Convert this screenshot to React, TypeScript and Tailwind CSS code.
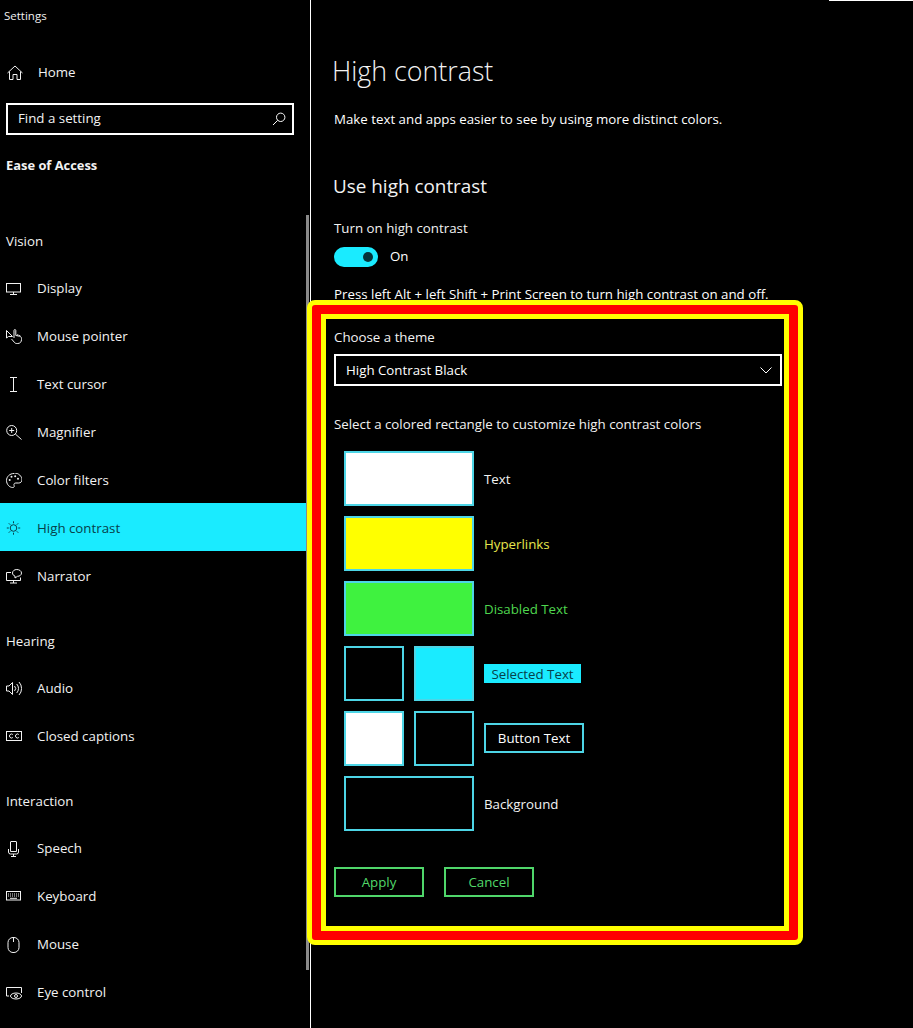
import React from "react";

const font = "font-['Open_Sans','Noto_Sans',sans-serif]";

function Ico({ children, w = 16, h = 16, vb = "0 0 16 16", className = "" }: { children: React.ReactNode; w?: number; h?: number; vb?: string; className?: string }) {
  return (
    <svg width={w} height={h} viewBox={vb} fill="none" stroke="currentColor" strokeWidth={1} className={`block shrink-0 ${className}`}>
      {children}
    </svg>
  );
}

const icons = {
  home: (
    <Ico>
      <path d="M.5 8 8 1l7.5 7" />
      <path d="M2.5 6.5v8H6v-5h4v5h3.5v-8" />
    </Ico>
  ),
  search: (
    <Ico w={14} h={14} vb="0 0 14 14">
      <circle cx="8.7" cy="5.3" r="4.2" />
      <path d="M5.7 8.3 1 13" />
    </Ico>
  ),
  display: (
    <Ico>
      <rect x=".5" y="2.5" width="14" height="8.5" />
      <path d="M7.5 11v2.5M4 13.5h7" />
    </Ico>
  ),
  pointer: (
    <Ico>
      <path d="M.5 1.500V9l2-1.500H6.500z" />
      <path d="M8 9V1.500c0-1.300 1.800-1.300 1.800 0V6.500l3.700.7c1.300.3 2 1 2 2.300v1c0 2.500-1.500 4-3.700 4h-1c-1.300 0-2-.5-2.700-1.500L5.500 10" />
      <path d="M11.800 6.800V5.200M13.700 7.200V6" />
    </Ico>
  ),
  cursor: (
    <Ico>
      <path d="M7.500.5v14M4 .5h7M4 14.500h7" />
    </Ico>
  ),
  magnifier: (
    <Ico>
      <circle cx="5.700" cy="5.500" r="5" />
      <path d="M9.300 9 15.500 14.500M5.700 3v5M3.200 5.500h5" />
    </Ico>
  ),
  palette: (
    <Ico>
      <path d="M8 .5C3.800.5.5 3.600.5 7.500c0 3.600 2.800 7 6.200 7 1.500 0 1.800-1 1.400-2-.5-1.200 0-2.500 1.700-2.500h2.900c1.600 0 3.300-1.200 3.300-3 0-3.700-3.400-7-7.500-7z" />
      <circle cx="3.700" cy="7" r="1" fill="currentColor" stroke="none" />
      <circle cx="5.500" cy="3.800" r="1" fill="currentColor" stroke="none" />
      <circle cx="9.200" cy="3.200" r="1" fill="currentColor" stroke="none" />
      <circle cx="12" cy="5.700" r="1" fill="currentColor" stroke="none" />
    </Ico>
  ),
  sun: (
    <Ico>
      <circle cx="7.500" cy="7" r="3.300" />
      <path d="M7.500.3v2M7.500 11.700v2M.8 7h2M12.200 7h2M2.800 2.300l1.400 1.400M10.800 10.300l1.400 1.400M12.200 2.300l-1.400 1.400M4.200 10.300l-1.400 1.400" />
    </Ico>
  ),
  narrator: (
    <Ico>
      <path d="M5 3.500H.5v8h14V8.500" />
      <path d="M7.500 11.500v2.500M4 14h7" />
      <path d="M6.500 4c0-2 1.800-3.500 4.300-3.500S15.500 2 15.500 4s-1.800 3.300-4 3.300L9 9V7C7.500 6.700 6.500 5.500 6.500 4z" />
    </Ico>
  ),
  audio: (
    <Ico>
      <path d="M.5 5H3L6.500 1.500v12L3 10H.5z" />
      <path d="M8.500 5a3.500 3.500 0 0 1 0 5M10.700 3a6.500 6.500 0 0 1 0 9M13 1a9.500 9.500 0 0 1 0 13" />
    </Ico>
  ),
  cc: (
    <Ico>
      <rect x=".5" y="2.500" width="15" height="9" />
      <path d="M6.800 5.500A2 2 0 1 0 6.800 8.500M12.800 5.500A2 2 0 1 0 12.800 8.500" />
    </Ico>
  ),
  mic: (
    <Ico>
      <path d="M5 .5h5a.5.5 0 0 1 .5.5v9.500h-6V1a.5.5 0 0 1 .5-.5z" />
      <path d="M2.500 8v3a2 2 0 0 0 2 2h6a2 2 0 0 0 2-2V8M7.500 13v2M5 15.500h5" />
    </Ico>
  ),
  keyboard: (
    <Ico>
      <rect x=".5" y="2.500" width="14" height="8.500" />
      <path d="M2 5h11M2 7h11" strokeDasharray="1 1" />
      <path d="M4 9.300h7" />
    </Ico>
  ),
  mouse: (
    <Ico>
      <rect x="2" y=".5" width="11" height="15" rx="5" />
      <path d="M7.500.5V5" />
    </Ico>
  ),
  eye: (
    <Ico>
      <path d="M.5 11V2.500h15V8M.5 11H3" />
      <ellipse cx="10" cy="11" rx="5.500" ry="3" />
      <circle cx="10" cy="11" r="1.500" />
    </Ico>
  ),
};

type Item = { label: string; icon: React.ReactNode; active?: boolean };

function NavRow({ label, icon, active }: Item) {
  return (
    <div className={`h-[48px] pt-[4px] flex items-center ${active ? "bg-[#1aebff] text-[#07414a]" : "text-[#f2f2f2]"}`}>
      <div className="w-[37px] pl-[6px] shrink-0">{icon}</div>
      <span className="text-[13.3px]">{label}</span>
    </div>
  );
}

function Group({ title, items, className }: { title: string; items: Item[]; className?: string }) {
  return (
    <div className={className}>
      <div className="h-[24px] pt-[2px] pl-[6px] flex items-center text-[13.3px] text-[#f2f2f2]">{title}</div>
      <div className="mt-[10px] flex flex-col">
        {items.map((i) => (
          <NavRow key={i.label} {...i} />
        ))}
      </div>
    </div>
  );
}

function Swatch({ w, bg }: { w: string; bg?: string }) {
  return <div className={`${w} h-[55px] border-2 border-[#4dd5e6] ${bg ?? "bg-black"}`} />;
}

export default function App() {
  return (
    <div className={`relative w-[913px] h-[1028px] overflow-hidden bg-black text-white flex ${font}`}>
      <div className="absolute top-0 right-0 w-[84px] h-px bg-white" />
      <aside className="relative w-[310px] shrink-0">
        <div className="pl-[4px] pt-[8px] h-[16px] text-[11.5px] leading-[16px] text-[#f0f0f0]">Settings</div>
        <div className="mt-[36px] h-[40px] pt-[2px] flex items-center text-[#f2f2f2]">
          <div className="w-[38px] pl-[7px]">{icons.home}</div>
          <span className="text-[13.3px]">Home</span>
        </div>
        <div className="ml-[6px] mt-[11px] w-[288px] h-[32px] border-2 border-white flex items-center justify-between pl-[10px] pr-[6px]">
          <span className="text-[13.3px] text-[#f2f2f2]">Find a setting</span>
          {icons.search}
        </div>
        <div className="pl-[6px] mt-[21px] text-[12.9px] font-bold leading-[18px] text-[#f2f2f2]">Ease of Access</div>
        <Group
          className="mt-[55px]"
          title="Vision"
          items={[
            { label: "Display", icon: icons.display },
            { label: "Mouse pointer", icon: icons.pointer },
            { label: "Text cursor", icon: icons.cursor },
            { label: "Magnifier", icon: icons.magnifier },
            { label: "Color filters", icon: icons.palette },
            { label: "High contrast", icon: icons.sun, active: true },
            { label: "Narrator", icon: icons.narrator },
          ]}
        />
        <Group
          className="mt-[30px]"
          title="Hearing"
          items={[
            { label: "Audio", icon: icons.audio },
            { label: "Closed captions", icon: icons.cc },
          ]}
        />
        <Group
          className="mt-[30px]"
          title="Interaction"
          items={[
            { label: "Speech", icon: icons.mic },
            { label: "Keyboard", icon: icons.keyboard },
            { label: "Mouse", icon: icons.mouse },
            { label: "Eye control", icon: icons.eye },
          ]}
        />
        <div className="absolute left-[306px] top-[215px] w-[3px] h-[755px] bg-[#8a8a8a]" />
      </aside>
      <main className="relative w-[603px] border-l border-white">
        <h1 className="pl-[21px] mt-[52px] text-[26.8px] leading-[38px] font-light text-[#f2f2f2]">High contrast</h1>
        <p className="pl-[23px] mt-[19px] text-[13.3px] leading-[20px]">Make text and apps easier to see by using more distinct colors.</p>
        <h2 className="pl-[22px] mt-[43px] text-[18.9px] leading-[28px] text-[#f2f2f2]">Use high contrast</h2>
        <div className="pl-[23px] mt-[18px] text-[13.3px] leading-[20px] text-[#f2f2f2]">Turn on high contrast</div>
        <div className="pl-[23px] mt-[9px] flex items-center gap-[12px] h-[20px]">
          <div className="w-[44px] h-[20px] rounded-full bg-[#1aebff] flex items-center justify-end pr-[5px]">
            <div className="w-[10px] h-[10px] rounded-full bg-[#06343a]" />
          </div>
          <span className="text-[13.3px]">On</span>
        </div>
        <p className="pl-[23px] mt-[17px] text-[13.3px] leading-[20px]">Press left Alt + left Shift + Print Screen to turn high contrast on and off.</p>
      </main>
      <section className="absolute left-[307px] top-[300px] w-[496px] h-[645px] rounded-[8px] border-[5px] border-[#ffff00] bg-[#ff0000] p-[9px]">
        <div className="w-full h-full border-[5px] border-[#ffff00] bg-black pl-[8px] pt-[8px]">
          <div className="text-[13.3px] leading-[20px] text-[#f2f2f2]">Choose a theme</div>
          <div className="mt-[7px] w-[448px] h-[32px] border-2 border-white flex items-center justify-between pl-[10px] pr-[8px]">
            <span className="text-[13.3px] pt-[2px]">High Contrast Black</span>
            <Ico w={12} h={7} vb="0 0 12 7">
              <path d="M.5.5 6 6l5.500-5.500" />
            </Ico>
          </div>
          <div className="mt-[28px] text-[13.3px] leading-[20px] text-[#f2f2f2]">Select a colored rectangle to customize high contrast colors</div>
          <div className="mt-[17px] pl-[10px] flex flex-col gap-[10px]">
            <div className="flex items-center gap-[10px]">
              <Swatch w="w-[130px]" bg="bg-white" />
              <span className="pt-[2px] text-[13.3px] text-[#f2f2f2]">Text</span>
            </div>
            <div className="flex items-center gap-[10px]">
              <Swatch w="w-[130px]" bg="bg-[#ffff00]" />
              <span className="pt-[2px] text-[13.3px] text-[#e6e64d]">Hyperlinks</span>
            </div>
            <div className="flex items-center gap-[10px]">
              <Swatch w="w-[130px]" bg="bg-[#3ff23f]" />
              <span className="pt-[2px] text-[13.3px] text-[#4fd64f]">Disabled Text</span>
            </div>
            <div className="flex items-center gap-[10px]">
              <Swatch w="w-[60px]" />
              <Swatch w="w-[60px]" bg="bg-[#1aebff]" />
              <span className="h-[19px] w-[97px] pt-[2px] bg-[#1aebff] text-[#07414a] text-[13.3px] flex items-center justify-center">Selected Text</span>
            </div>
            <div className="flex items-center gap-[10px]">
              <Swatch w="w-[60px]" bg="bg-white" />
              <Swatch w="w-[60px]" />
              <span className="h-[30px] w-[100px] mb-[2px] pt-[2px] border-2 border-[#4dd5e6] text-[13.3px] flex items-center justify-center">Button Text</span>
            </div>
            <div className="flex items-center gap-[10px]">
              <Swatch w="w-[130px]" />
              <span className="pt-[2px] text-[13.3px] text-[#f2f2f2]">Background</span>
            </div>
          </div>
          <div className="mt-[36px] flex gap-[20px]">
            <div className="w-[90px] h-[30px] pt-[2px] border-2 border-[#4fd66a] text-[#52d96a] text-[13.3px] flex items-center justify-center">Apply</div>
            <div className="w-[90px] h-[30px] pt-[2px] border-2 border-[#4fd66a] text-[#52d96a] text-[13.3px] flex items-center justify-center">Cancel</div>
          </div>
        </div>
      </section>
    </div>
  );
}
